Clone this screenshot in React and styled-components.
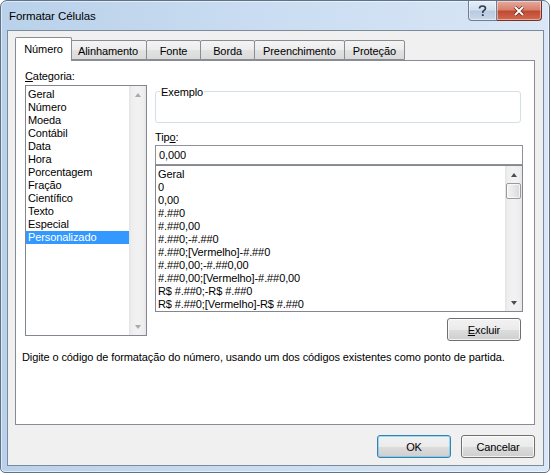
import React from "react";
import styled, { createGlobalStyle } from "styled-components";

const GlobalStyle = createGlobalStyle`
  html, body {
    margin: 0;
    padding: 0;
    background: #ffffff;
  }
  body {
    font-family: "Liberation Sans", Arial, sans-serif;
    font-size: 11px;
    letter-spacing: -0.1px;
    color: #000;
  }
`;

const Window = styled.div`
  box-sizing: border-box;
  width: 550px;
  height: 473px;
  border: 1px solid #5e7389;
  border-radius: 7px 7px 5px 5px;
  background: linear-gradient(to right, #b9d1ea 0%, #c9dcf1 45%, #d9e7f6 100%);
  box-shadow: inset 0 0 0 1px rgba(255, 255, 255, 0.55);
  padding: 0 5px 6px 6px;
  display: flex;
  flex-direction: column;
`;

const TitleBar = styled.div`
  height: 30px;
  display: flex;
  justify-content: space-between;
  align-items: flex-start;
`;

const Title = styled.div`
  align-self: center;
  padding-left: 2px;
  margin-top: 1px;
  font-size: 11.5px;
  color: #000;
`;

const CaptionButtons = styled.div`
  display: flex;
  margin-right: 2px;
`;

const CaptionButton = styled.div`
  box-sizing: border-box;
  width: ${(p) => p.$w}px;
  height: 20px;
  display: flex;
  align-items: center;
  justify-content: center;
  border: 1px solid ${(p) => (p.$close ? "#7a2f25" : "#6c7f96")};
  border-top: none;
  border-left: ${(p) => (p.$close ? "none" : undefined)};
  border-radius: ${(p) => (p.$close ? "0 0 4px 0" : "0 0 0 4px")};
  background: ${(p) =>
    p.$close
      ? "linear-gradient(to bottom, #e9a99b 0%, #d7826e 45%, #c24a33 55%, #d16a4f 100%)"
      : "linear-gradient(to bottom, #e6eef8 0%, #d3e0ee 45%, #b9cbe0 55%, #c9d8ea 100%)"};
  box-shadow: inset 0 0 0 1px rgba(255, 255, 255, 0.45);
`;

const Client = styled.div`
  box-sizing: border-box;
  flex: 1;
  border: 1px solid #7c8a9b;
  background: #f0f0f0;
  padding: 6px 8px 7px 7px;
  display: flex;
  flex-direction: column;
`;

const TabBar = styled.div`
  display: flex;
  align-items: flex-end;
  height: 23px;
  padding-left: 2px;
  position: relative;
  z-index: 1;
`;

const Tab = styled.div`
  box-sizing: border-box;
  min-width: ${(p) => (p.$active ? 57 : 55)}px;
  height: ${(p) => (p.$active ? 24 : 20)}px;
  padding: ${(p) => (p.$active ? "0 7px 1px" : "1px 8px 0")};
  margin: ${(p) => (p.$active ? "0 -2px -1px -2px" : "0 0 0 -1px")};
  display: flex;
  align-items: center;
  justify-content: center;
  border: 1px solid #898c95;
  border-bottom: ${(p) => (p.$active ? "none" : "1px solid #898c95")};
  border-radius: 2px 2px 0 0;
  background: ${(p) =>
    p.$active
      ? "#ffffff"
      : "linear-gradient(to bottom, #f4f4f4 0%, #ececec 50%, #e2e2e2 51%, #dadada 100%)"};
  position: relative;
  z-index: ${(p) => (p.$active ? 2 : 1)};
  white-space: nowrap;
  &:first-child {
    margin-left: ${(p) => (p.$active ? "-2px" : "0")};
  }
`;

const Panel = styled.div`
  box-sizing: border-box;
  height: 365px;
  border: 1px solid #898c95;
  background: #ffffff;
  display: flex;
  flex-direction: column;
`;

const TopSection = styled.div`
  display: flex;
  padding: 9px 0 0 9px;
`;

const Column = styled.div`
  display: flex;
  flex-direction: column;
  width: ${(p) => p.$w}px;
  margin-left: ${(p) => p.$ml || 0}px;
`;

const Label = styled.div`
  line-height: 13px;
  height: 13px;
  margin-top: ${(p) => p.$mt || 0}px;
`;

const ListBox = styled.div`
  box-sizing: border-box;
  height: ${(p) => p.$h}px;
  margin-top: ${(p) => p.$mt || 0}px;
  border: 1px solid #828790;
  background: #ffffff;
  display: flex;
`;

const Items = styled.div`
  flex: 1;
  padding-top: 2px;
  overflow: hidden;
`;

const Item = styled.div`
  height: 13px;
  line-height: 13px;
  padding-left: ${(p) => p.$pl || 2}px;
  white-space: nowrap;
  background: ${(p) => (p.$selected ? "#3399ff" : "transparent")};
  color: ${(p) => (p.$selected ? "#ffffff" : "#000000")};
`;

const ScrollBar = styled.div`
  width: 17px;
  display: flex;
  flex-direction: column;
  align-items: center;
  background: linear-gradient(
    to right,
    #e3e3e3 0%,
    #eeeeee 15%,
    #f2f2f2 50%,
    #eeeeee 85%,
    #e6e6e6 100%
  );
`;

const ArrowBox = styled.div`
  height: 17px;
  width: 17px;
  display: flex;
  align-items: center;
  justify-content: center;
  margin-top: ${(p) => (p.$down ? "auto" : "0")};
`;

const Arrow = styled.div`
  width: 0;
  height: 0;
  border-left: 3.5px solid transparent;
  border-right: 3.5px solid transparent;
  border-bottom: ${(p) => (p.$down ? "none" : `4px solid ${p.$color}`)};
  border-top: ${(p) => (p.$down ? `4px solid ${p.$color}` : "none")};
`;

const Thumb = styled.div`
  box-sizing: border-box;
  width: 15px;
  height: 16px;
  border: 1px solid #9a9a9a;
  border-radius: 2px;
  background: linear-gradient(to right, #f3f3f3 0%, #e8e8e8 50%, #d8d8d8 100%);
  box-shadow: inset 0 0 0 1px rgba(255, 255, 255, 0.7);
`;

const GroupBox = styled.div`
  box-sizing: border-box;
  position: relative;
  height: 32px;
  width: 366px;
  margin-top: ${(p) => p.$mt || 0}px;
  border: 1px solid #d5dfe5;
  border-radius: 3px;
`;

const Legend = styled.span`
  position: absolute;
  top: -6px;
  left: 4px;
  padding: 0 1px;
  line-height: 13px;
  background: #ffffff;
`;

const TextInput = styled.div`
  box-sizing: border-box;
  height: 20px;
  margin-top: 1px;
  border: 1px solid #8e9196;
  padding-left: 3px;
  line-height: 18px;
  background: #ffffff;
`;

const Button = styled.div`
  box-sizing: border-box;
  width: 74px;
  height: 23px;
  display: flex;
  align-items: center;
  justify-content: center;
  border: 1px solid ${(p) => (p.$default ? "#3c7fb1" : "#707070")};
  border-radius: 3px;
  background: linear-gradient(
    to bottom,
    #f2f2f2 0%,
    #ebebeb 50%,
    #dddddd 51%,
    #cfcfcf 100%
  );
  box-shadow: inset 0 0 0 1px
    ${(p) => (p.$default ? "rgba(72, 200, 245, 0.55)" : "rgba(255,255,255,0.75)")};
  align-self: ${(p) => (p.$right ? "flex-end" : "auto")};
  margin-top: ${(p) => p.$mt || 0}px;
  margin-right: ${(p) => p.$mr || 0}px;
`;

const Description = styled.div`
  line-height: 13px;
  padding-left: 6px;
  margin-top: 10px;
`;

const ButtonRow = styled.div`
  display: flex;
  justify-content: flex-end;
  gap: 10px;
  margin-top: 10px;
`;

const categories = [
  "Geral",
  "Número",
  "Moeda",
  "Contábil",
  "Data",
  "Hora",
  "Porcentagem",
  "Fração",
  "Científico",
  "Texto",
  "Especial",
  "Personalizado",
];

const formats = [
  "Geral",
  "0",
  "0,00",
  "#.##0",
  "#.##0,00",
  "#.##0;-#.##0",
  "#.##0;[Vermelho]-#.##0",
  "#.##0,00;-#.##0,00",
  "#.##0,00;[Vermelho]-#.##0,00",
  "R$ #.##0;-R$ #.##0",
  "R$ #.##0;[Vermelho]-R$ #.##0",
];

const tabs = ["Número", "Alinhamento", "Fonte", "Borda", "Preenchimento", "Proteção"];

const HelpGlyph = () => (
  <svg width="9" height="12" viewBox="0 0 9 12">
    <path
      d="M1.5 3.5 C1.5 1.5 3 1 4.5 1 C6.2 1 7.5 2 7.5 3.5 C7.5 5 5.5 5.5 4.8 6.8 L4.8 8"
      fill="none"
      stroke="#2e3d50"
      strokeWidth="1.6"
    />
    <rect x="3.9" y="9.2" width="1.8" height="1.8" fill="#2e3d50" />
  </svg>
);

const CloseGlyph = () => (
  <svg width="12" height="10" viewBox="0 0 12 10">
    <path d="M2 1 L10 9 M10 1 L2 9" stroke="#5a1a10" strokeWidth="3.2" />
    <path d="M2 1 L10 9 M10 1 L2 9" stroke="#ffffff" strokeWidth="2" />
  </svg>
);

export default function App() {
  return (
    <>
      <GlobalStyle />
      <Window>
        <TitleBar>
          <Title>Formatar Células</Title>
          <CaptionButtons>
            <CaptionButton $w={29}>
              <HelpGlyph />
            </CaptionButton>
            <CaptionButton $w={45} $close>
              <CloseGlyph />
            </CaptionButton>
          </CaptionButtons>
        </TitleBar>
        <Client>
          <TabBar>
            {tabs.map((t, i) => (
              <Tab key={t} $active={i === 0}>
                {t}
              </Tab>
            ))}
          </TabBar>
          <Panel>
            <TopSection>
              <Column $w={122}>
                <Label>
                  <u>C</u>ategoria:
                </Label>
                <ListBox $h={251} $mt={2}>
                  <Items>
                    {categories.map((c) => (
                      <Item key={c} $selected={c === "Personalizado"} $pl={2}>
                        {c}
                      </Item>
                    ))}
                  </Items>
                  <ScrollBar>
                    <ArrowBox>
                      <Arrow $color="#a9a9a9" />
                    </ArrowBox>
                    <ArrowBox $down>
                      <Arrow $down $color="#a9a9a9" />
                    </ArrowBox>
                  </ScrollBar>
                </ListBox>
              </Column>
              <Column $w={368} $ml={8}>
                <GroupBox $mt={21}>
                  <Legend>Exemplo</Legend>
                </GroupBox>
                <Label $mt={8}>
                  Tip<u>o</u>:
                </Label>
                <TextInput>0,000</TextInput>
                <ListBox $h={147}>
                  <Items>
                    {formats.map((f) => (
                      <Item key={f} $pl={2}>
                        {f}
                      </Item>
                    ))}
                  </Items>
                  <ScrollBar>
                    <ArrowBox>
                      <Arrow $color="#4d4d4d" />
                    </ArrowBox>
                    <Thumb />
                    <ArrowBox $down>
                      <Arrow $down $color="#4d4d4d" />
                    </ArrowBox>
                  </ScrollBar>
                </ListBox>
                <Button $right $mt={6} $mr={2}>
                  <span>
                    <u>E</u>xcluir
                  </span>
                </Button>
              </Column>
            </TopSection>
            <Description>
              Digite o código de formatação do número, usando um dos códigos
              existentes como ponto de partida.
            </Description>
          </Panel>
          <ButtonRow>
            <Button $default>OK</Button>
            <Button>Cancelar</Button>
          </ButtonRow>
        </Client>
      </Window>
    </>
  );
}
